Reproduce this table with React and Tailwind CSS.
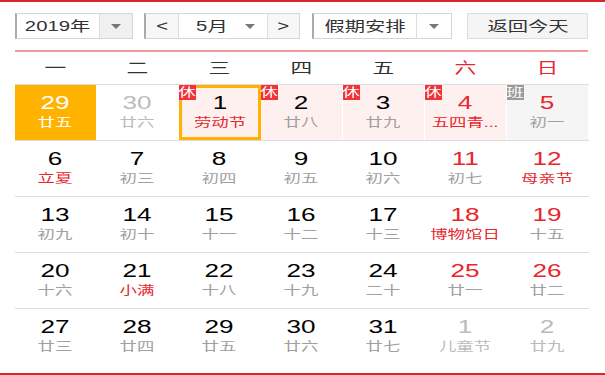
import React from 'react';

const font = { fontFamily: '"Liberation Sans", "Noto Sans CJK SC", sans-serif' };

// the reference is drawn horizontally stretched, so text is widened with scale-x
function W({ children, className = '' }) {
  return <span className={`inline-block scale-x-[1.45] ${className}`}>{children}</span>;
}

function Caret() {
  return <span className="inline-block w-0 h-0 border-l-[5px] border-r-[5px] border-t-[5px] border-l-transparent border-r-transparent border-t-[#777]"></span>;
}

const weekdays = ['一', '二', '三', '四', '五', '六', '日'];

const rows = [
  [
    { n: 29, l: '廿五', today: true },
    { n: 30, l: '廿六', other: true },
    { n: 1, l: '劳动节', hol: true, badge: '休', fest: true, sel: true },
    { n: 2, l: '廿八', hol: true, badge: '休' },
    { n: 3, l: '廿九', hol: true, badge: '休' },
    { n: 4, l: '五四青...', hol: true, badge: '休', red: true, fest: true },
    { n: 5, l: '初一', work: true, badge: '班', red: true },
  ],
  [
    { n: 6, l: '立夏', fest: true },
    { n: 7, l: '初三' },
    { n: 8, l: '初四' },
    { n: 9, l: '初五' },
    { n: 10, l: '初六' },
    { n: 11, l: '初七', red: true },
    { n: 12, l: '母亲节', red: true, fest: true },
  ],
  [
    { n: 13, l: '初九' },
    { n: 14, l: '初十' },
    { n: 15, l: '十一' },
    { n: 16, l: '十二' },
    { n: 17, l: '十三' },
    { n: 18, l: '博物馆日', red: true, fest: true },
    { n: 19, l: '十五', red: true },
  ],
  [
    { n: 20, l: '十六' },
    { n: 21, l: '小满', fest: true },
    { n: 22, l: '十八' },
    { n: 23, l: '十九' },
    { n: 24, l: '二十' },
    { n: 25, l: '廿一', red: true },
    { n: 26, l: '廿二', red: true },
  ],
  [
    { n: 27, l: '廿三' },
    { n: 28, l: '廿四' },
    { n: 29, l: '廿五' },
    { n: 30, l: '廿六' },
    { n: 31, l: '廿七' },
    { n: 1, l: '儿童节', other: true },
    { n: 2, l: '廿九', other: true },
  ],
];

function Cell({ d }) {
  let bg = 'bg-white';
  if (d.today) bg = 'bg-[#ffb300]';
  else if (d.hol) bg = 'bg-[#fff0f0]';
  else if (d.work) bg = 'bg-[#f5f5f5]';

  let numColor = 'text-black';
  if (d.today) numColor = 'text-white';
  else if (d.other) numColor = 'text-[#bbb]';
  else if (d.red) numColor = 'text-[#e8262d]';

  let lunColor = 'text-[#a0a0a0]';
  if (d.today) lunColor = 'text-white';
  else if (d.other) lunColor = 'text-[#bbb]';
  else if (d.fest) lunColor = 'text-[#e8262d]';

  const border = d.sel ? 'border-[3px] border-[#ffb300]' : 'border-r border-white';
  const badgePos = d.sel ? '-left-[3px] -top-[3px]' : 'left-0 top-0';

  return (
    <div className={`relative flex flex-col items-center justify-center ${bg} ${border}`}>
      {d.badge && (
        <span className={`absolute ${badgePos} w-[17px] h-[15px] flex items-center justify-center text-white text-[12px] leading-none ${d.badge === '休' ? 'bg-[#f2313a]' : 'bg-[#9a9a9a]'}`}>
          <W className="scale-x-[1.25]">{d.badge}</W>
        </span>
      )}
      <div className={`text-[18px] leading-[20px] ${numColor}`}><W>{d.n}</W></div>
      <div className={`text-[12px] leading-[17px] mt-[2px] ${lunColor}`}><W className="scale-x-[1.4]">{d.l}</W></div>
    </div>
  );
}

export default function App() {
  return (
    <div style={font} className="w-[605px] h-[375px] bg-white border-t-2 border-b-2 border-[#d9262b] text-[#333] overflow-hidden">
      <div className="flex items-center pt-[11px] pl-[15px] h-[37px] text-[14px]">
        <div className="flex h-[26px] w-[118px] border border-[#d5d5d5] border-l-2 border-l-[#aaa]">
          <div className="flex-1 flex items-center justify-center"><W>2019年</W></div>
          <div className="w-[33px] flex items-center justify-center bg-[#f0f0f0] border-l border-[#ddd]"><Caret /></div>
        </div>
        <div className="flex h-[26px] w-[156px] ml-[11px] border border-[#d5d5d5] border-l-2 border-l-[#aaa]">
          <div className="w-[33px] flex items-center justify-center bg-[#f7f7f7] border-r border-[#ddd]"><W>&lt;</W></div>
          <div className="flex-1 flex items-center pl-[22px]">
            <W>5月</W>
            <span className="ml-auto mr-[12px] flex"><Caret /></span>
          </div>
          <div className="w-[32px] flex items-center justify-center bg-[#f7f7f7] border-l border-[#ddd]"><W>&gt;</W></div>
        </div>
        <div className="flex h-[26px] w-[140px] ml-[12px] border border-[#d5d5d5] border-l-2 border-l-[#aaa]">
          <div className="w-[103px] flex items-center justify-center border-r border-[#ddd]"><W>假期安排</W></div>
          <div className="flex-1 flex items-center justify-center"><Caret /></div>
        </div>
        <div className="flex items-center justify-center h-[26px] w-[121px] ml-[15px] bg-[#f5f5f5] border border-[#ddd]">
          <W>返回今天</W>
        </div>
      </div>
      <div className="mx-[15px] mt-[11px] h-[2px] bg-[#f39a9a] w-[573px]"></div>
      <div className="grid grid-cols-7 w-[574px] ml-[15px] h-[32px] items-center text-[15px]">
        {weekdays.map((w, i) => (
          <div key={w} className={`text-center ${i >= 5 ? 'text-[#e8262d]' : 'text-[#333]'}`}><W>{w}</W></div>
        ))}
      </div>
      <div className="ml-[15px] w-[574px]">
        {rows.map((r, i) => (
          <div key={i} className="grid grid-cols-7 h-[56px] border-t border-[#ddd]">
            {r.map((d, j) => <Cell key={j} d={d} />)}
          </div>
        ))}
      </div>
    </div>
  );
}
